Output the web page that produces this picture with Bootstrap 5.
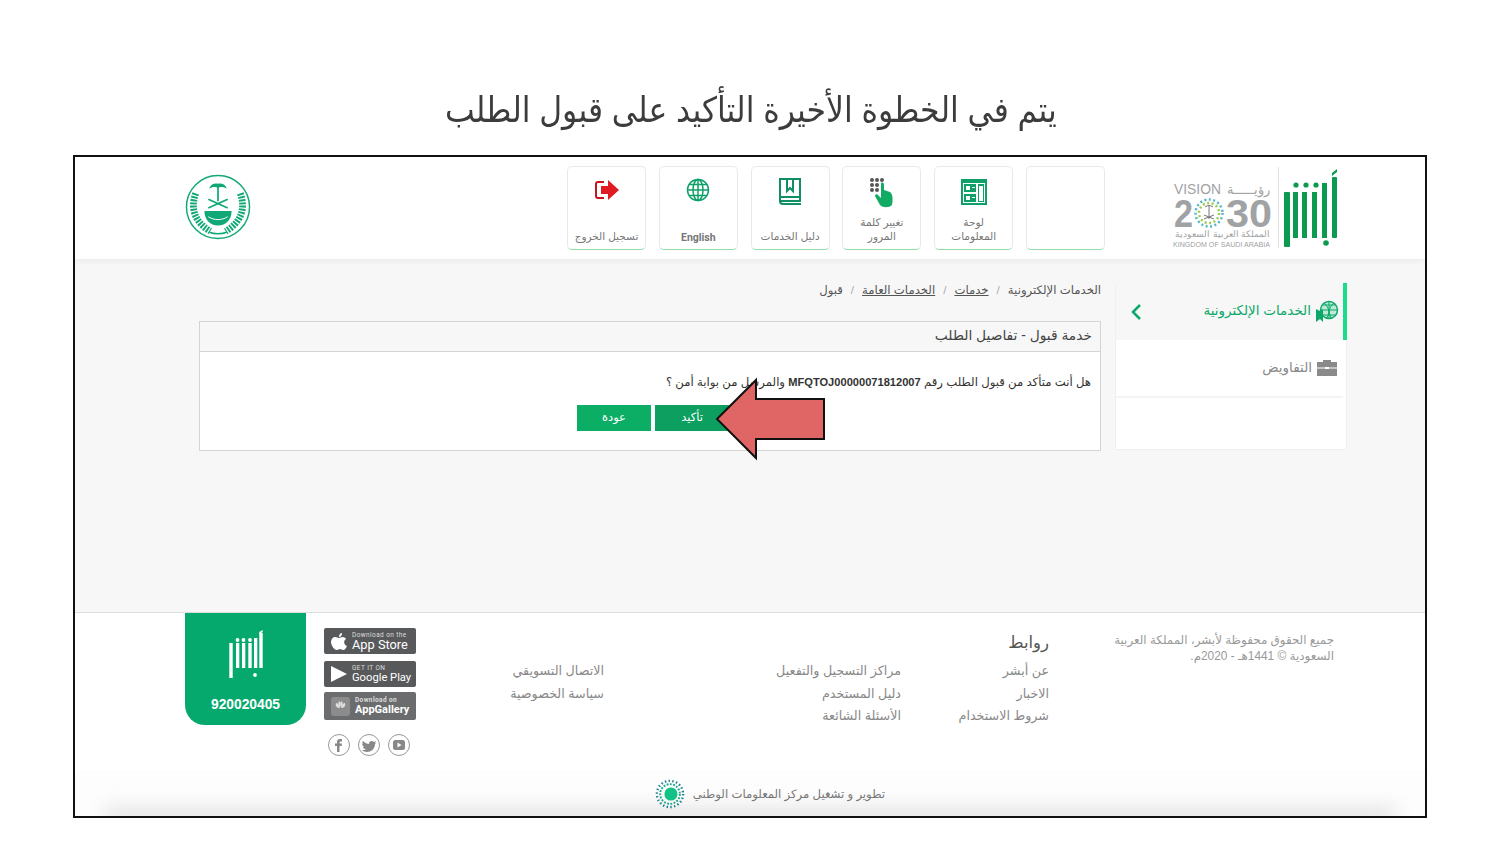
<!DOCTYPE html>
<html lang="ar">

<head>
    <meta charset="UTF-8">
    <title>قبول الطلب</title>
    <link href="https://cdn.jsdelivr.net/npm/bootstrap@5.3.3/dist/css/bootstrap.min.css" rel="stylesheet">
    <script src="https://cdn.jsdelivr.net/npm/bootstrap@5.3.3/dist/js/bootstrap.bundle.min.js"></script>

    <style>
        body {
            background: #fff;
            font-family: "Liberation Sans", "DejaVu Sans", sans-serif;
            color: #555;
            overflow: hidden;
        }

        .slide-title {
            height: 155px;
            padding: 87px 0 0 2px;
            margin: 0;
            font-size: 35px;
            line-height: 46px;
            font-weight: 400;
            color: #3c3c3c;
            text-align: center;
            transform: scaleX(.9);
        }

        .frame {
            position: relative;
            width: 1354px;
            height: 663px;
            margin-left: 73px;
            border: 2px solid #111;
            overflow: hidden;
            background: #fff;
        }

        .top-bar {
            height: 102px;
            padding: 9px 86px 0 0;
            background: #fff;
            box-shadow: 0 2px 6px rgba(0, 0, 0, .06);
            position: relative;
        }

        .tile {
            width: 79px;
            height: 84px;
            border: 1px solid #e9e9e9;
            border-bottom: 1px solid #8fdcaa;
            border-radius: 5px;
            font-size: 10.5px;
            line-height: 14px;
            color: #777;
            text-align: center;
            padding: 9px 2px 0;
        }

        .tile svg {
            display: block;
            margin: 0 auto;
            height: 32px;
        }

        .tile-label {
            height: 38px;
            margin-top: 1px;
            display: flex;
            flex-direction: column;
            justify-content: flex-end;
            padding-bottom: 4px;
        }

        .tile-label b {
            font-family: Roboto, sans-serif;
            margin-bottom: -2px;
        }

        .tile-gap {
            margin-right: 12.8px;
        }

        .logo-area {
            width: 166px;
            height: 84px;
            margin-left: 68px;
        }

        .seal {
            margin: 8px 316px 0 0;
        }

        .body-area {
            height: 353px;
            background: #f7f7f7;
            padding: 24px 78px 0 0;
        }

        .side-menu {
            width: 232px;
            height: 167px;
            background: #fff;
            border: 1px solid #f0f0f0;
            font-size: 13.5px;
        }

        .side-active {
            height: 57px;
            background: #f7f7f7;
            border-right: 4px solid #1bdc8a;
            margin: -1px -1px 0 0;
            color: #0ba86a;
            padding: 0 4px 0 14px;
        }

        .side-item {
            height: 58px;
            border-bottom: 2px solid #f4f4f4;
            color: #8a8a8a;
            padding: 0 5px 0 0;
            margin-right: 3px;
        }

        .content-col {
            width: 902px;
            margin-right: 14px;
        }

        .crumbs {
            height: 38px;
            font-size: 11.7px;
            line-height: 14px;
            color: #555;
        }

        .crumbs a {
            color: #555;
        }

        .crumbs i {
            font-style: normal;
            color: #aaa;
            margin: 0 8px;
        }

        .panel-box {
            height: 130px;
            background: #fff;
            border: 1px solid #d4d4d4;
        }

        .panel-head {
            height: 30px;
            background: #f7f7f7;
            border-bottom: 1px solid #d4d4d4;
            padding: 0 8px;
            font-size: 13.8px;
            line-height: 28px;
            color: #444;
        }

        .panel-msg {
            font-size: 11.7px;
            line-height: 14px;
            color: #333;
            padding: 23px 9px 0 0;
            height: 53px;
        }

        .panel-msg b {
            font-family: "Liberation Sans", sans-serif;
            font-size: 11.1px;
        }

        .green-btn {
            width: 74px;
            height: 26px;
            background: #0cae66;
            border: 0;
            border-radius: 0;
            color: #fff;
            font-size: 11.5px;
            padding: 0;
        }

        .green-btn.dark-one {
            background: #0c9f5f;
        }

        .panel-btns {
            margin-right: 371px;
        }

        .foot-area {
            height: 158px;
            border-top: 1px solid #ddd;
            background: #fff;
            position: relative;
        }

        .foot-copy {
            width: 222px;
            margin-right: 91px;
            padding-top: 19px;
            font-size: 11.9px;
            line-height: 16px;
            color: #999;
        }

        .foot-links {
            font-size: 12.7px;
            color: #888;
            line-height: 22.5px;
        }

        .foot-head {
            font-size: 16.5px;
            line-height: 24px;
            height: 30px;
            padding-top: 17px;
            box-sizing: content-box;
            color: #555;
        }

        .col-one {
            width: 148px;
            margin-right: 63px;
        }

        .col-two {
            width: 297px;
            padding-top: 47px;
        }

        .col-three {
            width: 148px;
            padding-top: 47px;
        }

        .store-col {
            width: 92px;
            margin-right: 40px;
            padding-top: 15px;
        }

        .store-badge {
            width: 92px;
            height: 26px;
            background: #58595b;
            border-radius: 2px;
            color: #fff;
            padding-left: 7px;
            font-family: Roboto, sans-serif;
            font-size: 12.8px;
            line-height: 12px;
            white-space: nowrap;
        }

        .store-badge small {
            display: block;
            font-size: 6.5px;
            line-height: 7px;
            letter-spacing: .4px;
            color: #ddd;
        }

        .badge-mid {
            margin: 7px 0 5px;
            font-size: 11.2px;
        }

        .badge-last {
            height: 28px;
            background: #6b6c6e;
            font-size: 11px;
            font-weight: 700;
        }

        .store-text {
            margin-left: 5px;
        }

        .circle-row {
            margin: 14px 0 0 4px;
            gap: 8px;
        }

        .phone-box {
            width: 121px;
            height: 112px;
            margin-right: 18px;
            background: #06a96d;
            border-radius: 0 0 20px 20px;
            color: #fff;
            font-size: 13.8px;
            font-weight: 700;
            padding-top: 16px;
        }

        .bottom-strip {
            position: relative;
            height: 46px;
            background: #fdfdfd;
            font-size: 11.7px;
            color: #777;
            padding: 2px 540px 0 0;
            overflow: hidden;
        }

        .bottom-strip::after {
            content: "";
            position: absolute;
            left: 30px;
            right: 30px;
            bottom: -10px;
            height: 20px;
            background: #e6e6e6;
            filter: blur(9px);
        }

        .bottom-strip span,
        .bottom-strip svg {
            position: relative;
            z-index: 1;
        }

        .big-arrow {
            position: absolute;
            left: 640px;
            top: 220px;
        }
    </style>

</head>

<body>
    <h1 class="slide-title" dir="rtl">يتم في الخطوة الأخيرة التأكيد على قبول الطلب</h1>

    <div class="frame" dir="rtl">

        <div class="top-bar d-flex align-items-start">
            <svg class="logo-area" viewBox="0 0 166 84">
                <g fill="#0b9a4f">
                    <rect x="111" y="26" width="6" height="55" rx="1" />
                    <rect x="120" y="26" width="5" height="46" />
                    <rect x="129" y="26" width="5" height="46" />
                    <rect x="139" y="26" width="5" height="46" />
                    <rect x="149" y="17" width="5" height="55" />
                    <rect x="159" y="11" width="5" height="61" rx="1" />
                    <path d="M159 7l5-4v3l-5 4z" />
                    <circle cx="123" cy="19" r="2.600" />
                    <circle cx="133" cy="19" r="2.600" />
                    <circle cx="143" cy="19" r="2.600" />
                    <circle cx="153" cy="77" r="2.800" />
                </g>
                <rect x="105" y="1" width="1" height="81" fill="#e2e2e2" />
                <g fill="#a0a2a4" font-family="Liberation Sans, sans-serif">
                    <text x="1" y="28" font-size="15" direction="ltr" textLength="47" lengthAdjust="spacingAndGlyphs">VISION</text>
                    <text x="1" y="61" font-size="38" font-weight="700" direction="ltr" textLength="19" lengthAdjust="spacingAndGlyphs">2</text>
                    <text x="53" y="61" font-size="38" font-weight="700" direction="ltr" textLength="46" lengthAdjust="spacingAndGlyphs">30</text>
                    <text x="97" y="28" font-size="12.500" text-anchor="start">رؤيـــــة</text>
                    <text x="97" y="71" font-size="8.500" text-anchor="start">المملكة العربية السعودية</text>
                    <text x="0" y="81" font-size="6.500" direction="ltr" textLength="97" lengthAdjust="spacingAndGlyphs">KINGDOM OF SAUDI ARABIA</text>
                </g>
                <g fill="none" stroke-width="2.500" stroke-dasharray="2 2.500">
                    <circle cx="36" cy="47" r="13.500" stroke="#55b6c9" />
                    <circle cx="36" cy="47" r="10" stroke="#9ccb4f" />
                </g>
                <path d="M36 40v13M31 53l10-4M41 53l-10-4M32 41c3-2 5-2 8 0" stroke="#777" fill="none" />
            </svg>

            <div class="tile"></div>
            <div class="tile tile-gap">
                <svg viewBox="0 0 32 32">
                    <path fill="#0fa06a" d="M3 3h26v26H3z" />
                    <path fill="#fff" d="M5 7h22v20H5z" />
                    <path fill="#0fa06a" d="M6 8h12v8H6zM6 18h12v8H6zM20 8h6v18h-6z" />
                    <path fill="#fff" d="M8 10h4v4H8zM8 20h4v4H8zM21 10h4v15h-4zM14 11h3v1h-3zM14 21h3v1h-3z" />
                </svg>
                <div class="tile-label"><span>لوحة</span><span>المعلومات</span></div>
            </div>
            <div class="tile tile-gap">
                <svg viewBox="0 0 32 32">
                    <g fill="#555">
                        <circle cx="6" cy="4" r="2" />
                        <circle cx="11" cy="4" r="2" />
                        <circle cx="16" cy="4" r="2" />
                        <circle cx="6" cy="9" r="2" />
                        <circle cx="11" cy="9" r="2" />
                        <circle cx="6" cy="14" r="2" />
                        <circle cx="11" cy="14" r="2" />
                    </g>
                    <path fill="#12ab64" d="M15 7c2-1 3 0 3 2v5l6 2c3 2 3 8 2 13-3 3-9 3-12 0l-5-9c0-2 2-2 3-1l3 3z" />
                </svg>
                <div class="tile-label"><span>تغيير كلمة</span><span>المرور</span></div>
            </div>
            <div class="tile tile-gap">
                <svg viewBox="0 0 32 32">
                    <path fill="none" stroke="#0f8f63" stroke-width="2" d="M6 25V3h20v22zM6 25c0 2 1 3 3 3h18" />
                    <path fill="none" stroke="#0f8f63" stroke-width="2" d="M13 3v12l3-3 3 3V3" />
                    <path stroke="#0f8f63" stroke-width="2" d="M6 21h20" />
                </svg>
                <div class="tile-label"><span>دليل الخدمات</span></div>
            </div>
            <div class="tile tile-gap">
                <svg viewBox="0 0 32 32">
                    <g fill="none" stroke="#0fa06a" stroke-width="1.500">
                        <circle cx="16" cy="14" r="10.500" />
                        <ellipse cx="16" cy="14" rx="5" ry="10.500" />
                        <path d="M16 3.500v21M5.500 14h21M7 8.500h18M7 19.500h18" />
                    </g>
                </svg>
                <div class="tile-label"><b>English</b></div>
            </div>
            <div class="tile tile-gap">
                <svg viewBox="0 0 32 32">
                    <path fill="none" stroke="#c9141c" stroke-width="2" d="M13 6H7a2 2 0 0 0-2 2v12a2 2 0 0 0 2 2h6" />
                    <path fill="#e01b22" d="M10 10h7V4l11 10-11 10v-6h-7z" />
                </svg>
                <div class="tile-label"><span>تسجيل الخروج</span></div>
            </div>

            <svg class="seal" width="66" height="66" viewBox="0 0 68 68">
                <circle cx="34" cy="34" r="32.500" fill="#fff" stroke="#11a877" stroke-width="1.500" />
                <path d="M11 20c-6 17 0 30 15 39M57 20c6 17 0 30-15 39" fill="none" stroke="#11a877" stroke-width="7" stroke-dasharray="2 1.200" />
                <path d="M16 22c-4 12-1 23 10 31M52 22c4 12 1 23-10 31" fill="none" stroke="#fff" stroke-width=".8" />
                <path d="M25 60c5 2 13 2 18 0" fill="none" stroke="#11a877" stroke-width="1.500" />
                <path d="M20 38h28c0 9-6 15-14 15s-14-6-14-15z" fill="#11a877" />
                <path d="M24 44c6 4 14 4 20 0" fill="none" stroke="#fff" />
                <path d="M27 38c3-4 11-4 14 0" fill="#fff" />
                <path d="M34 12v16" fill="none" stroke="#11a877" stroke-width="1.800" />
                <path d="M34 10c-4-1-8 1-9 5 3-2 6-2 9-1 3-1 6-1 9 1-1-4-5-6-9-5z" fill="#11a877" />
                <path d="M24 26l20 9M44 26l-20 9" fill="none" stroke="#11a877" stroke-width="1.800" />
            </svg>
        </div>

        <div class="body-area d-flex align-items-start">
            <div class="side-menu">
                <div class="side-active d-flex align-items-center justify-content-between">
                    <span class="d-flex align-items-center gap-1">
                        <svg width="24" height="24" viewBox="0 0 24 24">
                            <circle cx="14" cy="10" r="8.500" fill="#bfe8d6" stroke="#0ba86a" stroke-width="1.500" />
                            <path d="M14 2v17M6 10h17M8 5h12M8 15h12M9 3c6 5 6 11 2 16M19 3c-6 5-6 11-2 16" fill="none" stroke="#0ba86a" />
                            <path d="M1 9l4 2 3-2v13l-3-3-4 3z" fill="#0ba86a" />
                        </svg>
                        الخدمات الإلكترونية
                    </span>
                    <svg width="12" height="18" viewBox="0 0 12 18">
                        <path d="M10 2 3 9l7 7" fill="none" stroke="#0ba86a" stroke-width="2.500" />
                    </svg>
                </div>
                <div class="side-item d-flex align-items-center gap-1">
                    <svg width="22" height="18" viewBox="0 0 22 18">
                        <path d="M7 3V1h8v2h6v14H1V3z" fill="#8a8a8a" />
                        <path d="M1 9h20" stroke="#fff" />
                        <path d="M9 8h4v2H9z" fill="#fff" />
                    </svg>
                    التفاويض
                </div>
            </div>

            <div class="content-col">
                <div class="crumbs">
                    <span>الخدمات الإلكترونية</span><i>/</i><a href="#">خدمات</a><i>/</i><a href="#">الخدمات العامة</a><i>/</i><span>قبول</span>
                </div>
                <div class="panel-box">
                    <div class="panel-head">خدمة قبول - تفاصيل الطلب</div>
                    <div class="panel-msg">هل أنت متأكد من قبول الطلب رقم <b>MFQTOJ00000071812007</b> والمرسل من بوابة أمن ؟</div>
                    <div class="panel-btns d-flex gap-1">
                        <button class="btn green-btn dark-one">تأكيد</button>
                        <button class="btn green-btn">عودة</button>
                    </div>
                </div>
            </div>
        </div>

        <div class="foot-area d-flex align-items-start">
            <div class="foot-copy">جميع الحقوق محفوظة لأبشر، المملكة العربية السعودية © 1441هـ - 2020م.</div>
            <div class="foot-links col-one">
                <div class="foot-head">روابط</div>
                <div>عن أبشر</div>
                <div>الاخبار</div>
                <div>شروط الاستخدام</div>
            </div>
            <div class="foot-links col-two">
                <div>مراكز التسجيل والتفعيل</div>
                <div>دليل المستخدم</div>
                <div>الأسئلة الشائعة</div>
            </div>
            <div class="foot-links col-three">
                <div>الاتصال التسويقي</div>
                <div>سياسة الخصوصية</div>
            </div>

            <div class="store-col" dir="ltr">
                <div class="store-badge d-flex align-items-center">
                    <svg width="16" height="18" viewBox="0 0 16 18">
                        <path fill="#fff" d="M11 1c0 2-1 4-3 4 0-2 1-4 3-4zM8 6c1 0 2-1 4-1 1 0 3 1 3 2-3 2-2 6 1 7-1 2-2 4-4 4-1 0-2-1-3-1s-2 1-3 1C3 18 0 13 0 10c0-3 2-5 4-5 2 0 3 1 4 1z" />
                    </svg>
                    <div class="store-text"><small>Download on the</small>App Store</div>
                </div>
                <div class="store-badge badge-mid d-flex align-items-center">
                    <svg width="16" height="18" viewBox="0 0 16 18">
                        <path fill="#fff" d="M0 1l16 8L0 17z" />
                    </svg>
                    <div class="store-text"><small>GET IT ON</small>Google Play</div>
                </div>
                <div class="store-badge badge-last d-flex align-items-center">
                    <svg width="19" height="19" viewBox="0 0 19 19">
                        <rect width="19" height="19" rx="3" fill="#8c8c8c" />
                        <path fill="#ddd" d="M5 6c2 0 3 2 4 5-3 0-5-2-4-5zM14 6c-2 0-3 2-4 5 3 0 5-2 4-5zM8 4c2 1 2 4 1 6-2-2-2-4-1-6zM11 4c-2 1-2 4-1 6 2-2 2-4 1-6z" />
                    </svg>
                    <div class="store-text"><small>Download on</small>AppGallery</div>
                </div>
                <div class="d-flex circle-row">
                    <svg width="22" height="22" viewBox="0 0 22 22">
                        <circle cx="11" cy="11" r="10.500" fill="#fff" stroke="#999" />
                        <path fill="#888" d="M9 18v-6H7V9.500h2V8c0-2 1-3 3-3h2v2.500h-1c-1 0-1.500.3-1.500 1.200v.8H14l-.4 2.500h-2.100v6z" />
                    </svg>
                    <svg width="22" height="22" viewBox="0 0 22 22">
                        <circle cx="11" cy="11" r="10.500" fill="#fff" stroke="#999" />
                        <path fill="#888" d="M5 7c2 2 4 3 6 3 0-3 3-4 5-2l2-1-1 2 1 0-1 1c0 5-4 8-8 8-2 0-4-1-5-2 2 0 3 0 4-1-2 0-3-1-3-2h1c-1-1-2-2-2-3l1 .5C4 9 4.500 8 5 7z" />
                    </svg>
                    <svg width="22" height="22" viewBox="0 0 22 22">
                        <circle cx="11" cy="11" r="10.500" fill="#fff" stroke="#999" />
                        <rect x="5" y="6" width="12" height="10" rx="2.500" fill="#888" />
                        <path fill="#fff" d="M9.500 8.500l4 2.500-4 2.500z" />
                    </svg>
                </div>
            </div>

            <div class="phone-box text-center">
                <svg width="36" height="50" viewBox="0 0 36 50" class="d-block mx-auto mb-3">
                    <g fill="#fff">
                        <rect x="1.300" y="14" width="3.400" height="35" />
                        <rect x="8" y="14" width="3.300" height="25" />
                        <rect x="14" y="14" width="3.300" height="25" />
                        <rect x="20.300" y="14" width="3.400" height="25" />
                        <rect x="26" y="9" width="3.300" height="30" />
                        <rect x="31.300" y="4" width="3.400" height="35" />
                        <path d="M31.300 3l3.400-2v2l-3.400 2z" />
                        <circle cx="9.500" cy="11" r="1.900" />
                        <circle cx="15.500" cy="11" r="1.900" />
                        <circle cx="22" cy="11" r="1.900" />
                        <circle cx="27" cy="46" r="1.900" />
                    </g>
                </svg>
                920020405
            </div>
        </div>

        <div class="bottom-strip d-flex align-items-center gap-2">
            <span>تطوير و تشغيل مركز المعلومات الوطني</span>
            <svg width="30" height="30" viewBox="0 0 32 32">
                <circle cx="16" cy="16" r="14" fill="none" stroke="#1b7f8f" stroke-width="2.500" stroke-dasharray="1.500 2.500" />
                <circle cx="16" cy="16" r="10.500" fill="none" stroke="#17a98a" stroke-width="2" stroke-dasharray="2 1.500" />
                <circle cx="17" cy="16" r="7" fill="#12c184" />
            </svg>
        </div>

        <svg class="big-arrow" width="112" height="84" viewBox="0 0 112 84">
            <polygon points="2,42 41,3 41,22 109,22 109,62 41,62 41,81" fill="#e06666" stroke="#111" stroke-width="2" />
        </svg>
    </div>
</body>

</html>
